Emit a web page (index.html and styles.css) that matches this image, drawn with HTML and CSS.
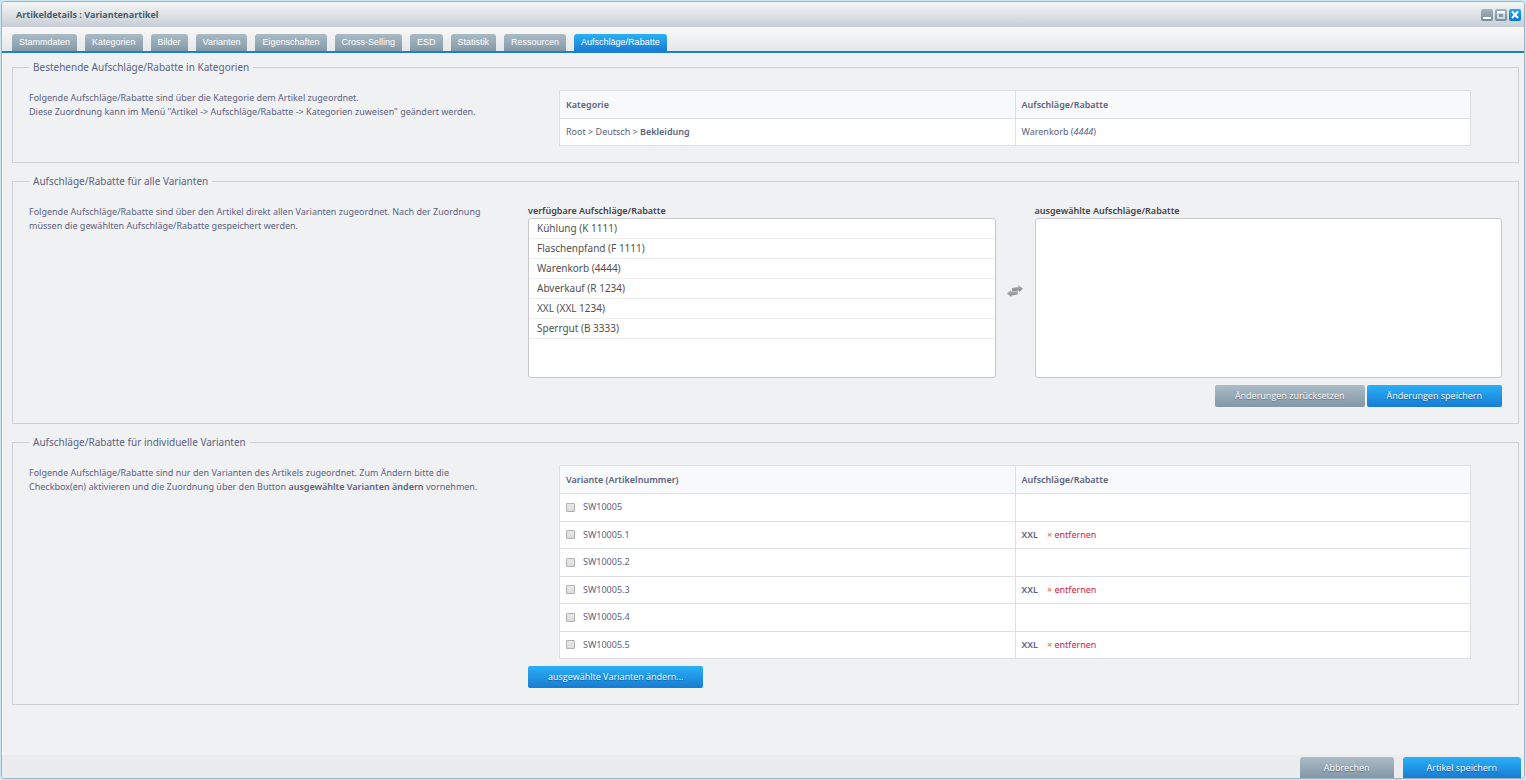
FILE: index.html
```html
<!DOCTYPE html>
<html lang="de">
<head>
<meta charset="utf-8">
<title>Artikeldetails : Variantenartikel</title>
<link rel="stylesheet" href="styles.css">
</head>
<body>
<div class="window">
  <header class="titlebar">
    <h1 class="title">Artikeldetails : Variantenartikel</h1>
    <div class="tools">
      <button class="tool" type="button" aria-label="Minimieren"><svg viewBox="0 0 12 12"><path d="M2 8h8v2H2z" fill="#fff"/></svg></button>
      <button class="tool" type="button" aria-label="Maximieren"><svg viewBox="0 0 12 12"><path d="M2 2h8v8H2z" fill="#d3dbe1"/><path d="M2 2h8v2H2z" fill="#fff"/><path d="M4 5h4v3H4z" fill="#8397a5"/></svg></button>
      <button class="tool tool-close" type="button" aria-label="Schließen"><svg viewBox="0 0 12 12"><path d="M3 2.500l6 6.500M9 2.500l-6 6.500" stroke="#fff" stroke-width="2"/></svg></button>
    </div>
  </header>
  <nav class="tabs">
    <button class="tab" type="button">Stammdaten</button>
    <button class="tab" type="button">Kategorien</button>
    <button class="tab" type="button">Bilder</button>
    <button class="tab" type="button">Varianten</button>
    <button class="tab" type="button">Eigenschaften</button>
    <button class="tab" type="button">Cross-Selling</button>
    <button class="tab" type="button">ESD</button>
    <button class="tab" type="button">Statistik</button>
    <button class="tab" type="button">Ressourcen</button>
    <button class="tab active" type="button">Aufschläge/Rabatte</button>
  </nav>
  <main class="content">
    <fieldset class="group">
      <legend>Bestehende Aufschläge/Rabatte in Kategorien</legend>
      <div class="columns">
        <p class="hint">Folgende Aufschläge/Rabatte sind über die Kategorie dem Artikel zugeordnet.<br>Diese Zuordnung kann im Menü "Artikel -&gt; Aufschläge/Rabatte -&gt; Kategorien zuweisen" geändert werden.</p>
        <div class="panel">
          <table class="grid grid-short">
            <thead><tr><th>Kategorie</th><th>Aufschläge/Rabatte</th></tr></thead>
            <tbody><tr><td>Root &gt; Deutsch &gt; <b>Bekleidung</b></td><td>Warenkorb (<i>4444</i>)</td></tr></tbody>
          </table>
        </div>
      </div>
    </fieldset>

    <fieldset class="group">
      <legend>Aufschläge/Rabatte für alle Varianten</legend>
      <div class="columns">
        <p class="hint">Folgende Aufschläge/Rabatte sind über den Artikel direkt allen Varianten zugeordnet. Nach der Zuordnung müssen die gewählten Aufschläge/Rabatte gespeichert werden.</p>
        <div class="panel">
          <div class="transfer">
            <section class="side">
              <h2 class="caption">verfügbare Aufschläge/Rabatte</h2>
              <ul class="list">
                <li>Kühlung (K 1111)</li>
                <li>Flaschenpfand (F 1111)</li>
                <li>Warenkorb (4444)</li>
                <li>Abverkauf (R 1234)</li>
                <li>XXL (XXL 1234)</li>
                <li>Sperrgut (B 3333)</li>
              </ul>
            </section>
            <svg class="swap" viewBox="0 0 16 12"><defs><linearGradient id="g" x2="0" y2="1"><stop offset="0" stop-color="#b5b5b5"/><stop offset="1" stop-color="#858585"/></linearGradient></defs><path d="M5 3L11.500 2 11 0 16 3.500 12.500 7 12 5.500 5 6.500z" fill="url(#g)"/><path d="M11 6L4.500 7 4 5 0 8.500 4.500 12 4.500 10.500 10.500 9.500z" fill="url(#g)"/></svg>
            <section class="side">
              <h2 class="caption">ausgewählte Aufschläge/Rabatte</h2>
              <ul class="list"></ul>
            </section>
          </div>
          <div class="actions">
            <button class="btn" type="button">Änderungen zurücksetzen</button>
            <button class="btn primary" type="button">Änderungen speichern</button>
          </div>
        </div>
      </div>
    </fieldset>

    <fieldset class="group">
      <legend>Aufschläge/Rabatte für individuelle Varianten</legend>
      <div class="columns">
        <p class="hint">Folgende Aufschläge/Rabatte sind nur den Varianten des Artikels zugeordnet. Zum Ändern bitte die Checkbox(en) aktivieren und die Zuordnung über den Button <b>ausgewählte Varianten ändern</b> vornehmen.</p>
        <div class="panel">
          <table class="grid grid-long">
            <thead><tr><th>Variante (Artikelnummer)</th><th>Aufschläge/Rabatte</th></tr></thead>
            <tbody>
              <tr><td><label class="check"><input type="checkbox">SW10005</label></td><td></td></tr>
              <tr><td><label class="check"><input type="checkbox">SW10005.1</label></td><td><b>XXL</b><a class="remove" href="#"><span class="cross">×</span> entfernen</a></td></tr>
              <tr><td><label class="check"><input type="checkbox">SW10005.2</label></td><td></td></tr>
              <tr><td><label class="check"><input type="checkbox">SW10005.3</label></td><td><b>XXL</b><a class="remove" href="#"><span class="cross">×</span> entfernen</a></td></tr>
              <tr><td><label class="check"><input type="checkbox">SW10005.4</label></td><td></td></tr>
              <tr><td><label class="check"><input type="checkbox">SW10005.5</label></td><td><b>XXL</b><a class="remove" href="#"><span class="cross">×</span> entfernen</a></td></tr>
            </tbody>
          </table>
          <div class="actions actions-left">
            <button class="btn primary" type="button">ausgewählte Varianten ändern...</button>
          </div>
        </div>
      </div>
    </fieldset>
  </main>
  <footer class="footer">
    <button class="btn" type="button">Abbrechen</button>
    <button class="btn primary" type="button">Artikel speichern</button>
  </footer>
</div>
</body>
</html>
```
FILE: styles.css
```css
* { box-sizing: border-box; }
body {
  margin: 0;
  padding: 1px;
  min-height: 100vh;
  display: flex;
  background: #cbe6f0;
  color: #5c6280;
  font: 9px/14px "Noto Sans", "Open Sans", sans-serif;
}
button { border: 0; margin: 0; font: inherit; cursor: pointer; }
.window {
  flex: 1;
  min-width: 0;
  display: flex;
  flex-direction: column;
  border: 1px solid #9cb4c2;
  border-radius: 4px;
  background: #f0f1f3;
  overflow: hidden;
  box-shadow: inset 1px 0 #fff;
}
.titlebar {
  display: flex;
  justify-content: space-between;
  align-items: center;
  height: 25px;
  padding: 0 3px 0 14px;
  background: linear-gradient(#f3f5f5, #dfe2e4 50%, #c5cdd6);
}
.title { margin: 0; font: 700 9px/14px "Open Sans", sans-serif; color: #475c6a; }
.tools { display: flex; gap: 2px; }
.tool {
  width: 12px;
  height: 12px;
  padding: 0;
  border-radius: 2px;
  background: linear-gradient(#a5b4be, #768b9a);
}
.tool-close { background: linear-gradient(#1fa8f6, #0878cf); }
.tool svg { display: block; width: 12px; height: 12px; fill: none; }
.tabs {
  display: flex;
  align-items: flex-end;
  gap: 8px;
  height: 26px;
  padding: 0 10px;
  border-bottom: 2px solid #1a7fd0;
  background: linear-gradient(#f8f8f8, #e6e7e9);
}
.tab {
  height: 17px;
  padding: 0 7px;
  border-radius: 3px 3px 0 0;
  background: linear-gradient(#a9bac4, #8499a8);
  color: #fff;
  font: 9px/17px "Liberation Sans", Arial, sans-serif;
}
.tab.active { background: linear-gradient(#2ab0f8, #187cd2); }
.content {
  flex: 1;
  display: flex;
  flex-direction: column;
  gap: 11px;
  padding: 7px 5px 10px 10px;
}
.group {
  min-width: 0;
  margin: 0;
  padding: 16px;
  border: 1px solid #cdd0d4;
}
.group legend { padding: 0 4px; font-size: 10px; line-height: 14px; }
.columns { display: grid; grid-template-columns: 499fr 974fr; }
.hint { margin: 0; padding: 1px 32px 0 0; }
.grid {
  width: calc(100% - 62px);
  margin: 0 31px;
  table-layout: fixed;
  border-collapse: collapse;
  background: #fff;
}
.grid-short { height: 56px; }
.grid-long { height: 194px; }
.grid th, .grid td {
  width: 50%;
  padding: 0 7px 0 6px;
  border: 1px solid #dcdfe4;
  text-align: left;
  vertical-align: middle;
}
.grid th { height: 28px; background: #f7f9fb; font-weight: 600; }
b { font-weight: 600; }
.check { display: flex; align-items: center; gap: 8px; }
.check input {
  appearance: none;
  width: 9px;
  height: 9px;
  margin: 0;
  border: 1px solid #b0b0b0;
  border-radius: 1px;
  background: linear-gradient(#e9e9e9, #dcdcdc);
}
.check input:checked { background: #187cd2; }
.remove { margin-left: 9px; color: #d81b40; text-decoration: none; }
.cross { color: #e0603f; }
.transfer { display: grid; grid-template-columns: 1fr 39px 1fr; align-items: center; }
.swap { width: 16px; height: 12px; justify-self: center; }
.caption { margin: 0; font-size: 9px; line-height: 14px; font-weight: 600; color: #444; }
.list {
  height: 160px;
  margin: 0;
  padding: 0;
  list-style: none;
  overflow: auto;
  border: 1px solid #c8c8c8;
  border-radius: 3px;
  background: #fff;
  color: #505050;
  font-size: 10px;
}
.list li { height: 20px; padding: 0 8px; line-height: 19px; border-bottom: 1px solid #ededed; }
.actions { display: flex; justify-content: flex-end; gap: 2px; margin-top: 7px; }
.actions-left { justify-content: flex-start; }
.btn {
  height: 22px;
  padding: 0 20px;
  border-radius: 2px;
  background: linear-gradient(#abbcc6, #8297a7);
  color: #fff;
  font: 9px/22px "Open Sans", "Noto Sans", sans-serif;
  text-shadow: 0 1px 1px #52677a;
}
.btn.primary { background: linear-gradient(#2ab0f8, #187cd2); text-shadow: 0 1px 1px #0c569c; }
.footer {
  display: flex;
  justify-content: flex-end;
  gap: 9px;
  padding: 2px 3px 0;
  background: #ebecee;
}
.footer .btn { height: 21px; padding: 0 24px; border-radius: 3px 3px 0 0; line-height: 20px; }
```
